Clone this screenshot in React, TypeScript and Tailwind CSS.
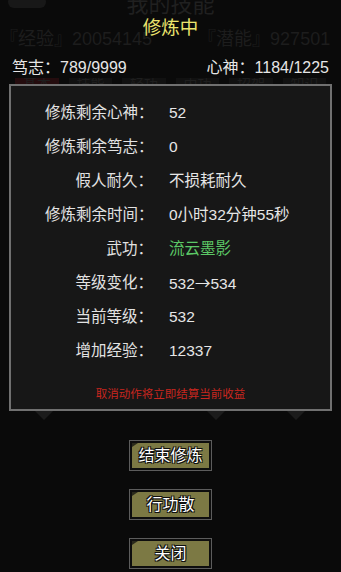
const FONT = { fontFamily: '"Liberation Sans", "Noto Sans CJK SC", sans-serif' };
const CJK = { fontFamily: '"Noto Sans CJK SC", sans-serif' };

const rows: { label: string; value: React.ReactNode; green?: boolean }[] = [
  { label: "修炼剩余心神：", value: "52" },
  { label: "修炼剩余笃志：", value: "0" },
  { label: "假人耐久：", value: "不损耗耐久" },
  { label: "修炼剩余时间：", value: "0小时32分钟55秒" },
  { label: "武功：", value: "流云墨影", green: true },
  {
    label: "等级变化：",
    value: (
      <>
        532<span style={CJK}>→</span>534
      </>
    ),
  },
  { label: "当前等级：", value: "532" },
  { label: "增加经验：", value: "12337" },
];

const tabs = ["基本", "技能", "轻功", "内功", "招架", "知识"];

function GameButton({ text }: { text: string }) {
  return (
    <div className="relative w-[83px] h-[31px] border border-[#5c5c5c] bg-[#0e0e0e] p-[2px]">
      <div className="relative w-full h-full bg-[#7c7944] flex items-center justify-center">
        <svg className="absolute left-0 top-0" width="6" height="4" viewBox="0 0 6 4">
          <polygon points="0,0 6,0 0,4" fill="#2a2a1c" />
        </svg>
        <span className="text-[16px] leading-none text-white [text-shadow:0_0_1px_#000,1px_1px_0_#111,-1px_-1px_0_#111,1px_-1px_0_#111,-1px_1px_0_#111]">
          {text}
        </span>
      </div>
    </div>
  );
}

export default function App() {
  return (
    <div className="relative w-[341px] h-[572px] overflow-hidden bg-[#0a0a0a]" style={FONT}>
      {/* page behind the dialog */}
      <div className="flex flex-col">
        <div className="relative h-[26px] flex justify-center">
          <div className="absolute left-[8px] top-[-4px] w-[38px] h-[12px] rounded-full bg-[#181818]" />
          <span className="text-[22px] leading-[22px] mt-[-6px] text-[#202020]">我的技能</span>
        </div>
        <div className="flex h-[26px] items-center text-[18px] text-[#1d1d1d] whitespace-nowrap">
          <span>『经验』20054145</span>
          <span className="ml-[46px]">『潜能』927501</span>
        </div>
        <div className="flex mt-[26px] h-[8px] px-[15px] gap-[10px] text-[14px] leading-[8px] text-[#1e1e1e] overflow-hidden">
          {tabs.map((t, i) => (
            <div key={t} className={"w-[46px] h-[8px] " + (i === 0 ? "bg-[#240c0e]" : "bg-[#111111]")}>
              <span className="block pl-[8px] pt-[2px]">{t}</span>
            </div>
          ))}
        </div>
      </div>

      {/* dialog */}
      <div className="absolute inset-0 flex flex-col">
        <div className="pt-[15px] h-[41px] text-center text-[18.5px] leading-[26px] text-[#ece46e]">修炼中</div>
        <div className="mt-[17px] h-[20px] px-[12px] flex items-center justify-between text-[16px] leading-[20px] text-[#e6e6e6]">
          <span>笃志：789/9999</span>
          <span>心神：1184/1225</span>
        </div>
        <div className="mt-[6px] mx-[9px] h-[327px] border-2 border-[#707070] bg-[#171717] flex flex-col pt-[10px]">
          {rows.map((r) => (
            <div key={r.label} className="flex h-[34px] items-center text-[15.5px] whitespace-nowrap">
              <span className="ml-[34px] w-[108px] text-right text-[#e2e2e2]">{r.label}</span>
              <span className={"ml-[16px] " + (r.green ? "text-[#5cc866]" : "text-[#e6e6e6]")}>{r.value}</span>
            </div>
          ))}
          <div className="mt-[18px] text-center text-[11.5px] leading-[16px] text-[#c8261f]">取消动作将立即结算当前收益</div>
        </div>
        <div className="relative h-[29px]">
          <svg className="absolute left-[35px] top-0" width="18" height="9" viewBox="0 0 18 9">
            <polygon points="0,0 18,0 9,9" fill="#1c1c1c" />
          </svg>
          <svg className="absolute left-[207px] top-0" width="18" height="9" viewBox="0 0 18 9">
            <polygon points="0,0 18,0 9,9" fill="#1c1c1c" />
          </svg>
          <svg className="absolute left-[287px] top-0" width="18" height="9" viewBox="0 0 18 9">
            <polygon points="0,0 18,0 9,9" fill="#1c1c1c" />
          </svg>
        </div>
        <div className="flex flex-col items-center gap-[18px]">
          <GameButton text="结束修炼" />
          <GameButton text="行功散" />
          <GameButton text="关闭" />
        </div>
      </div>
    </div>
  );
}
